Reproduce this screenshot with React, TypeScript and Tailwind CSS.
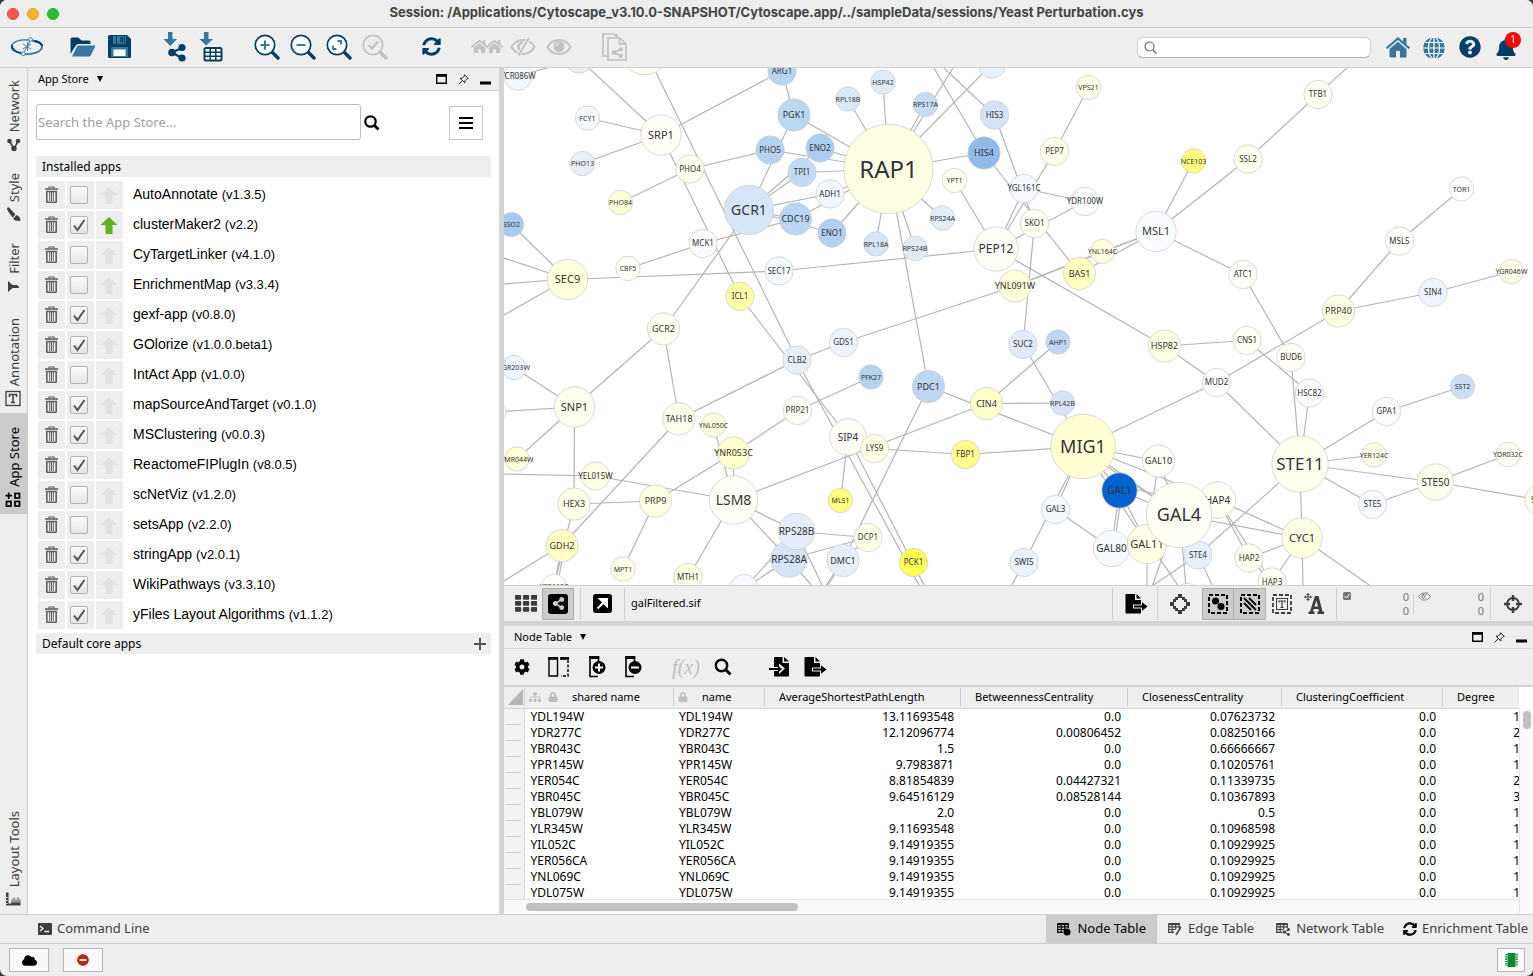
import { useState } from "react";
import type { ReactNode } from "react";
import {
  FaBell, FaCloud, FaCog, FaHome, FaLock, FaMinusCircle, FaQuestionCircle,
  FaShareAlt, FaSitemap, FaSyncAlt,
} from "react-icons/fa";

type GraphNode = [name: string, x: number, y: number, r: number, fill: string];

const nodes: GraphNode[] = [
  ["YCR086W", 518, 76, 14.5, "#f3f8fd"], ["@a", 579, 59, 14.5, "#e6effa"], ["@b", 645, 50, 25, "#fffff0"],
  ["ARG1", 782, 71, 14.5, "#b7d4f1"], ["RPL18B", 848, 99, 12.5, "#d9e8f8"], ["FCY1", 587.5, 118, 12.5, "#f4f9ff"],
  ["PGK1", 794, 115, 16.5, "#bcd7f2"], ["SRP1", 661, 135, 20.5, "#fffff7"], ["PHO5", 770, 150, 14.5, "#b5d1f0"],
  ["ENO2", 820, 148, 14.5, "#abcdf0"], ["PHO13", 582.5, 163.5, 12.5, "#e8effa"], ["PHO4", 690, 169, 14.5, "#fffff0"],
  ["TPI1", 802, 172.5, 14.5, "#c3daf4"], ["ADH1", 830, 194, 14.5, "#f1f7fc"], ["PHO84", 620.5, 202.5, 12.5, "#ffffd5"],
  ["GCR1", 749, 210, 25, "#d7e6f7"], ["CDC19", 795.5, 219, 16.5, "#b9d5f2"], ["ENO1", 832, 233, 14.5, "#b2d0f0"],
  ["SSO2", 511.5, 224.5, 12.5, "#a7cbef"], ["MCK1", 703, 243.5, 14.5, "#fafbff"], ["SEC17", 779, 271, 14.5, "#f6faff"],
  ["CBF5", 628, 268.5, 12.5, "#fffff7"], ["SEC9", 567.5, 279.5, 20.5, "#ffffdc"], ["ICL1", 740, 296.5, 14.5, "#ffffa8"],
  ["GCR2", 663.5, 329, 16.5, "#fffff0"], ["RAP1", 888.5, 169, 45, "#ffffe5"], ["HSP42", 883, 82, 12.5, "#dfebf9"],
  ["RPS17A", 925.5, 104.5, 12.5, "#c6dcf4"], ["@c", 992, 64, 14.5, "#e8f2fb"], ["HIS3", 994.5, 115, 14.5, "#d4e3f6"],
  ["HIS4", 984, 153, 16.5, "#91bae8"], ["VPS21", 1088.5, 87.5, 12.5, "#ffffe5"], ["PEP7", 1054.5, 151.5, 14.5, "#ffffec"],
  ["YPT1", 954.5, 180.5, 12.5, "#fffff2"], ["YGL161C", 1024, 188.5, 14.5, "#f6faff"], ["YDR100W", 1085, 201.5, 14.5, "#fbfdff"],
  ["RPS24A", 942.5, 218, 12.5, "#e3edfa"], ["SKO1", 1034.5, 223.5, 14.5, "#fffff2"], ["RPL18A", 876, 244, 12.5, "#d6e6f6"],
  ["RPS24B", 915, 248.5, 12.5, "#e0ecf9"], ["PEP12", 996, 249, 22.5, "#fffff7"], ["MSL1", 1156, 231.5, 20.5, "#f9fbff"],
  ["YNL164C", 1102.5, 251.5, 12.5, "#ffffdc"], ["BAS1", 1079.5, 273.5, 16.5, "#ffffc0"], ["YNL091W", 1015, 286, 16.5, "#ffffdc"],
  ["NCE103", 1193.5, 161, 12.5, "#ffff7d"], ["TFB1", 1318, 94.5, 14.5, "#fffff2"], ["SSL2", 1248, 159, 14.5, "#ffffee"],
  ["TOR1", 1461.5, 189, 12.5, "#fbfdff"], ["MSL5", 1399.5, 241, 14.5, "#fffffd"], ["ATC1", 1243, 274.5, 14.5, "#fffff9"],
  ["SIN4", 1433, 292.5, 14.5, "#eef4fd"], ["YGR046W", 1511.5, 271.5, 12.5, "#ffffe8"], ["PRP40", 1338.5, 311, 16.5, "#ffffe2"],
  ["YGR203W", 514, 367.5, 12.5, "#eef4fd"], ["SNP1", 574.5, 407, 20.5, "#ffffee"], ["@d", 494, 412, 12.5, "#fffff8"],
  ["YMR044W", 517, 459, 12.5, "#ffffd8"], ["TAH18", 679, 419, 16.5, "#fffff0"], ["YNL050C", 713.5, 425, 12.5, "#ffffdc"],
  ["YNR053C", 733.5, 453, 16.5, "#ffffcd"], ["CLB2", 797, 360, 14.5, "#e6effa"], ["GDS1", 843.5, 342.5, 14.5, "#eef4fd"],
  ["PRP21", 797.5, 410.5, 14.5, "#fffff5"], ["SIP4", 848, 437, 18.5, "#fffff7"], ["YEL015W", 595.5, 476, 14.5, "#ffffe5"],
  ["HEX3", 574, 504, 16.5, "#ffffe5"], ["PRP9", 655.5, 501, 16.5, "#ffffe2"], ["LSM8", 733.5, 500, 24.5, "#fffff5"],
  ["MLS1", 840.5, 500.5, 12.5, "#ffff80"], ["GDH2", 562, 545.5, 16.5, "#ffffc4"], ["RPS28A", 789, 559, 18.5, "#d5e5f6"],
  ["RPS28B", 796.5, 531.5, 18.5, "#e4eefa"], ["DMC1", 843, 560.5, 16.5, "#e6effa"], ["MPT1", 623, 569, 12.5, "#ffffe5"],
  ["MTH1", 688, 577.5, 14.5, "#ffffe0"], ["@e", 744, 588.5, 14.5, "#f8fbff"], ["YER110C", 554, 586.5, 12.5, "#fffffb"],
  ["SUC2", 1023, 344.5, 14.5, "#dfebf9"], ["AHP1", 1058, 342, 12.5, "#bed8f3"], ["HSP82", 1164.5, 346, 16.5, "#ffffe5"],
  ["PFK27", 871, 377, 12.5, "#b5d2f1"], ["PDC1", 928.5, 386.5, 16.5, "#bdd7f2"], ["CIN4", 986.5, 403.5, 16.5, "#ffffcb"],
  ["RPL42B", 1062.5, 403, 12.5, "#d6e5f6"], ["MIG1", 1083, 446.5, 32.5, "#ffffd2"], ["LYS9", 874.5, 448.5, 14.5, "#ffffe5"],
  ["FBP1", 965.5, 454.5, 14.5, "#ffff8c"], ["GAL10", 1158.5, 461, 16.5, "#fffff5"], ["GAL1", 1119.5, 490.5, 18, "#0063d1"],
  ["GAL3", 1055.5, 509.5, 14.5, "#f3f8fd"], ["GAL80", 1111.5, 548.5, 18.5, "#f6faff"], ["GAL11", 1147, 544, 20, "#ffffe5"],
  ["STE4", 1198, 555, 14.5, "#e6effa"], ["HAP4", 1217.5, 500, 18.5, "#fffff2"], ["GAL4", 1179, 515, 33, "#fffff5"],
  ["SWI5", 1024, 562.5, 14.5, "#e9f1fa"], ["DCP1", 868, 537.5, 14.5, "#ffffe8"], ["PCK1", 913.5, 562.5, 14.5, "#ffff55"],
  ["@f", 1187, 597.5, 14.5, "#ffffe5"], ["CNS1", 1247, 340.5, 14.5, "#fffff5"], ["BUD6", 1291, 357.5, 14.5, "#fffff7"],
  ["MUD2", 1216.5, 382.5, 14.5, "#fefeff"], ["HSC82", 1309.5, 393, 14.5, "#fafbff"], ["GPA1", 1386.5, 411.5, 14.5, "#fcfdff"],
  ["SST2", 1462.5, 386.5, 12.5, "#cbdef5"], ["STE11", 1300, 464, 28.5, "#fffff0"], ["YER124C", 1374, 455, 12.5, "#ffffe5"],
  ["STE50", 1435.5, 482, 18.5, "#ffffee"], ["YDR032C", 1508, 454.5, 12.5, "#fffff2"], ["STE5", 1372.5, 504.5, 14.5, "#f6faff"],
  ["STE7", 1540, 500, 15.5, "#ffffee"], ["CYC1", 1302, 538, 20.5, "#ffffe2"], ["HAP2", 1249, 558, 14.5, "#fffff2"],
  ["HAP3", 1272, 582, 14.5, "#fffff2"],
];

const links =
  "YCR086W-@a @a-SRP1 @b-CLB2 SRP1-ARG1 SRP1-FCY1 SRP1-PHO13 SRP1-ICL1 ICL1-SIP4 ARG1-PGK1 PGK1-GCR1 PGK1-RAP1 PHO4-PHO5 PHO4-PHO84 PHO5-RAP1 ENO2-RAP1 TPI1-RAP1 TPI1-GCR1 ENO2-GCR1 ADH1-GCR1 ADH1-RAP1 CDC19-GCR1 CDC19-RAP1 ENO1-RAP1 ENO1-GCR1 MCK1-CDC19 MCK1-CBF5 GCR1-GCR2 SEC9-SSO2 SEC9-SEC17 SEC17-PEP12 RAP1-RPL18B RAP1-HSP42 RAP1-RPS17A RAP1-@c RAP1-HIS4 HIS3-SKO1 HIS4-BAS1 YPT1-PEP12 RAP1-RPS24A RAP1-RPL18A RAP1-RPS24B RAP1-PDC1 PEP7-VPS21 PEP7-PEP12 YGL161C-PEP12 YGL161C-YDR100W YDR100W-PEP12 SKO1-SUC2 PEP12-HSP82 YNL091W-MSL1 BAS1-MSL1 YNL164C-MSL1 YNL091W-YNL164C YNL091W-GDS1 MSL1-NCE103 MSL1-SSL2 MSL1-ATC1 SSL2-TFB1 ATC1-BUD6 MSL5-TOR1 MSL5-PRP40 PRP40-SIN4 SIN4-YGR046W PRP40-MUD2 SNP1-GCR2 SNP1-YGR203W SNP1-@d SNP1-YMR044W SNP1-HEX3 TAH18-GCR2 TAH18-CLB2 TAH18-GDH2 CLB2-GDS1 PRP21-YNR053C PRP21-PFK27 YNR053C-PRP9 YNR053C-LSM8 YNL050C-LSM8 YEL015W-LSM8 LSM8-CIN4 LSM8-RPS28B LSM8-RPS28A LSM8-MTH1 HEX3-PRP9 HEX3-YER110C GDH2-YER110C PRP9-MPT1 SIP4-MLS1 SIP4-LYS9 RPS28B-DCP1 RPS28A-DCP1 RPS28A-@e RPS28B-@e DMC1-DCP1 PDC1-DMC1 PDC1-MIG1 CIN4-AHP1 CIN4-RPL42B SUC2-MIG1 LYS9-FBP1 FBP1-MIG1 MIG1-MUD2 MIG1-GAL10 MIG1-GAL4 MIG1-GAL1 MIG1-GAL11 MIG1-GAL3 MIG1-SWI5 MIG1-HAP4 GAL3-GAL80 GAL1-GAL80 GAL1-GAL11 GAL1-GAL4 GAL10-GAL4 GAL10-GAL11 STE11-MUD2 STE11-BUD6 STE11-HSC82 STE11-GPA1 STE11-YER124C STE11-STE50 STE11-STE5 STE11-CYC1 STE11-STE4 STE50-STE5 STE50-YDR032C STE50-STE7 GPA1-SST2 HSP82-CNS1 HSP82-MUD2 CNS1-HSC82 HAP4-CYC1 GAL4-CYC1 HAP4-HAP2 HAP4-HAP3 CYC1-HAP2 CYC1-HAP3 HAP2-HAP3";

const strayLines: [number, number, number, number][] = [
  [567, 279, 504, 258], [567, 279, 504, 284], [567, 279, 504, 315], [891, 168, 953, 68], [984, 153, 934, 68],
  [994, 115, 944, 68], [1318, 94, 1347, 68], [595, 476, 504, 474], [562, 545, 504, 581], [797, 361, 920, 587],
  [848, 437, 925, 587], [789, 559, 813, 587], [796, 531, 823, 587], [843, 560, 825, 587], [843, 560, 827, 587],
  [1024, 562, 1011, 587], [1122, 490, 1114, 548], [1122, 486, 1180, 500], [1085, 452, 1152, 496], [1302, 538, 1303, 587],
  [1302, 538, 1372, 587], [1198, 555, 1213, 587], [1147, 544, 1147, 587], [1150, 544, 1179, 587], [1170, 535, 1152, 587],
  [1198, 555, 1152, 586], [1181, 530, 1186, 587], [565, 545, 557, 587],
];

const byName = new Map(nodes.map((n) => [n[0], n]));

function labelSize(r: number) {
  if (r > 40) return 24;
  if (r > 30) return 18;
  if (r > 26) return 17;
  if (r > 23) return 14;
  if (r > 21) return 12;
  if (r > 19) return 11;
  if (r > 17) return 10;
  if (r > 16) return 9;
  if (r > 14) return 8;
  return 7;
}

function NetworkCanvas() {
  return (
    <svg className="block h-full w-full" viewBox="504 68 1029 517" preserveAspectRatio="xMinYMin slice" role="img" aria-label="galFiltered.sif network">
      <g stroke="#b4b4b4" strokeWidth="1.2">
        {links.split(" ").map((l) => {
          const [a, b] = l.split("-").map((k) => byName.get(k)!);
          return <line key={l} x1={a[1]} y1={a[2]} x2={b[1]} y2={b[2]} />;
        })}
        {strayLines.map(([x1, y1, x2, y2], i) => <line key={i} x1={x1} y1={y1} x2={x2} y2={y2} />)}
      </g>
      {nodes.map(([name, x, y, r, fill]) => (
        <g key={name}>
          <circle cx={x} cy={y} r={r - 0.3} fill={fill} stroke="#cfcfcf" strokeWidth="0.8" />
          {name[0] !== "@" && (
            <text x={x} y={y + labelSize(r) * 0.36} fontSize={labelSize(r)} textAnchor="middle" fill="#333333">{name}</text>
          )}
        </g>
      ))}
    </svg>
  );
}

function ToolButton({ label, children, className = "" }: { label: string; children: ReactNode; className?: string }) {
  return <button type="button" aria-label={label} className={`relative flex h-9 w-9 items-center justify-center ${className}`}>{children}</button>;
}

const NAVY = "#053e63";
const BLUE = "#36769f";

function Magnifier({ color, fill = "none", children }: { color: string; fill?: string; children: ReactNode }) {
  return (
    <svg width="26" height="26" viewBox="0 0 26 26" fill="none">
      <path d="M18 18l6 6" stroke={color} strokeWidth="3.4" strokeLinecap="round" />
      <circle cx="11" cy="11" r="9.7" stroke={color} strokeWidth="1.7" fill={fill} />
      {children}
    </svg>
  );
}

function EyeSlash({ size = 26 }: { size?: number }) {
  return (
    <svg width={size} height={size} viewBox="0 0 26 26" fill="none" stroke="currentColor" strokeWidth="1.8">
      <path d="M1.5 13C4 8.5 8 6 13 6s9 2.5 11.5 7C22 17.5 18 20 13 20s-9-2.5-11.5-7z" />
      <path d="M13 8.500a4.500 4.500 0 0 0-3.500 7.500" strokeWidth="2.600" />
      <path d="M19.500 3.500L8 22" stroke="#eee" strokeWidth="4" />
      <path d="M19 4L8.500 21.500" strokeWidth="1.800" />
    </svg>
  );
}

function MainToolbar() {
  return (
    <header className="flex h-10 shrink-0 items-center justify-between border-b border-[#d0d0d0] bg-[#eeeeee] px-[9px]">
      <div className="flex items-center gap-5 pb-0.5">
        <ToolButton label="Cytoscape">
          <svg width="34" height="22" viewBox="0 0 34 22" fill="none">
            <path d="M19 4C10 3 2 6 1.500 10.500C1 14 6 16.500 12 17.500" stroke={BLUE} strokeWidth="1.300" />
            <path d="M2 9c-1 4 4 7 9 8" stroke={NAVY} strokeWidth="1.800" />
            <path d="M22 4.500c6 .6 10 3 10 6c0 5-8 8-17 7.500" stroke={BLUE} strokeWidth="1.800" />
            <path d="M24 5c5 1 8 3 8 5" stroke={NAVY} strokeWidth="2" />
            <path d="M20 5l-2.500 5.500L14 16M13 8l8 5M21 8l-8 5M17.500 6v9" stroke={BLUE} strokeWidth="0.900" />
            <circle cx="20.500" cy="3.500" r="1.800" stroke={BLUE} fill="#fff" />
            <circle cx="13.500" cy="17.800" r="1.800" stroke={BLUE} fill="#fff" />
          </svg>
        </ToolButton>
        <div className="flex">
          <ToolButton label="Open session">
            <svg width="26" height="20" viewBox="0 0 26 20">
              <path d="M.5 17V2Q.5.5 2 .5h6.500l3 3h7.500q1.500 0 1.500 1.500v2H8.500Q6.500 7 5.500 9z" fill={NAVY} />
              <path d="M2 19.500L7 9.500Q7.500 8.500 9 8.500h16.500L21 18q-.7 1.500-2.500 1.500z" fill={BLUE} />
            </svg>
          </ToolButton>
          <ToolButton label="Save session">
            <svg width="23" height="23" viewBox="0 0 23 23">
              <path d="M0 1.500Q0 0 1.500 0H19l4 4v17.500q0 1.500-1.500 1.500h-20Q0 23 0 21.500z" fill={NAVY} />
              <path d="M5 1h13v8H5z" fill={BLUE} /><path d="M8.500 1v8M16.500 1v8" stroke={NAVY} /><path d="M12.500 2h2.500v5.500h-2.500z" fill={NAVY} />
              <path d="M3 12h17v10H3z" fill={BLUE} /><path d="M5.500 14.500h12v6.500h-12z" fill="#fff" />
            </svg>
          </ToolButton>
        </div>
        <div className="flex">
          <ToolButton label="Import network">
            <svg width="24" height="32" viewBox="0 0 24 32">
              <path d="M5 1h4.500v7h4.500L7.200 15L.5 8H5z" fill={BLUE} />
              <path d="M9 21.500L19 17M9 21.500l10 5.500" stroke={NAVY} strokeWidth="2.200" />
              <circle cx="9" cy="21.500" r="3.800" fill={NAVY} /><circle cx="19" cy="16.500" r="3.600" fill={NAVY} /><circle cx="19" cy="27" r="3.600" fill={NAVY} />
            </svg>
          </ToolButton>
          <ToolButton label="Import table">
            <svg width="24" height="32" viewBox="0 0 24 32">
              <path d="M5 1h4.500v7h4.500L7.200 14.500L.5 8H5z" fill={BLUE} />
              <rect x="5.500" y="17" width="17" height="12.500" rx="1.500" fill="#fff" stroke={NAVY} strokeWidth="2" />
              <path d="M5.500 21.300h17M5.500 25.300h17M11.200 16.500v13M16.800 16.500v13" stroke={NAVY} strokeWidth="1.500" />
            </svg>
          </ToolButton>
        </div>
        <div className="flex">
          <ToolButton label="Zoom in"><Magnifier color={NAVY} fill="#fff"><path d="M11 6.500v9M6.500 11h9" stroke={BLUE} strokeWidth="2" /></Magnifier></ToolButton>
          <ToolButton label="Zoom out"><Magnifier color={NAVY} fill="#fff"><path d="M6.500 11h9" stroke={BLUE} strokeWidth="2" /></Magnifier></ToolButton>
          <ToolButton label="Fit content"><Magnifier color={NAVY} fill="#fff"><path d="M11.500 7H15v3.500M7 11.500V15h3.500" stroke={BLUE} strokeWidth="1.900" /></Magnifier></ToolButton>
          <ToolButton label="Fit selected"><Magnifier color="#c2c2c2"><path d="M6.500 11l3.500 3.500l6-7" stroke="#c2c2c2" strokeWidth="2.400" /></Magnifier></ToolButton>
        </div>
        <ToolButton label="Apply layout"><FaSyncAlt size={19} color={NAVY} /></ToolButton>
        <div className="flex text-[#c2c2c2]">
          <ToolButton label="First neighbours">
            <FaHome size={17} className="shrink-0" /><FaHome size={17} className="-ml-0.5 shrink-0" />
          </ToolButton>
          <ToolButton label="Hide selected"><EyeSlash /></ToolButton>
          <ToolButton label="Show all">
            <svg width="26" height="26" viewBox="0 0 26 26" fill="none">
              <path d="M1.500 13C4 8.500 8 6 13 6s9 2.500 11.500 7C22 17.500 18 20 13 20s-9-2.500-11.500-7z" stroke="currentColor" strokeWidth="1.800" />
              <circle cx="13" cy="12.500" r="5.500" fill="currentColor" /><path d="M10 12a3 3 0 0 1 3-2.500" stroke="#eee" strokeWidth="1.200" />
            </svg>
          </ToolButton>
        </div>
        <ToolButton label="New network from selection">
          <svg width="26" height="28" viewBox="0 0 26 28" fill="none" stroke="#c2c2c2" strokeWidth="1.700">
            <path d="M5 23H1V1h11l3 3" /><path d="M6 5h12l6 6v16H6z" /><path d="M17.500 5v6H24M15 1v4" />
            <path d="M11.500 19.500l8-3.500M11.500 19.500l8 3.500" /><g fill="#c2c2c2" stroke="none"><circle cx="12" cy="19.500" r="2.300" /><circle cx="18.800" cy="16.300" r="2.100" /><circle cx="18.800" cy="22.800" r="2.100" /></g>
          </svg>
        </ToolButton>
      </div>
      <div className="flex items-center">
        <label className="mr-[9px] flex h-[21px] w-[234px] items-center rounded-[6px] border border-[#cfcfcf] border-b-[#b5b5b5] bg-white px-[6px]">
          <svg width="13" height="13" viewBox="0 0 13 13" fill="none" stroke="#6d6d6d" strokeWidth="1.200"><circle cx="5.500" cy="5.500" r="4.500" /><path d="M9 9l3.500 3.500" /></svg>
          <input aria-label="Search network" className="ml-1 min-w-0 flex-1 bg-transparent text-xs outline-none" />
        </label>
        <ToolButton label="Home">
          <svg width="24" height="21" viewBox="0 0 24 21" fill={BLUE}>
            <path d="M12 0L0 10.500l1.300 1.500L12 3l10.700 9l1.300-1.500L20.500 7.500V1H17v3.500z" />
            <path d="M12 4.800L3.500 12v7.500q0 1 1 1H10V14h4v6.500h5.500q1 0 1-1V12z" />
          </svg>
        </ToolButton>
        <ToolButton label="Web">
          <svg width="24" height="24" viewBox="0 0 24 24" fill="none">
            <circle cx="12" cy="12" r="11.500" fill="#fff" /><circle cx="12" cy="12" r="10.800" fill={BLUE} />
            <path d="M12 1v22M1 12h22M3 6.500h18M3 17.500h18" stroke="#fff" strokeWidth="1.200" /><ellipse cx="12" cy="12" rx="5.500" ry="11" stroke="#fff" strokeWidth="1.200" />
          </svg>
        </ToolButton>
        <ToolButton label="Help" className="pb-0.5"><FaQuestionCircle size={22} color={NAVY} /></ToolButton>
        <ToolButton label="Notifications">
          <FaBell size={22} color={NAVY} className="mt-0.5" />
          <span className="absolute right-[3px] top-[2px] flex h-4 w-4 items-center justify-center rounded-full bg-[#fb0007] text-[10px] text-white">1</span>
        </ToolButton>
      </div>
    </header>
  );
}

const sideTabs = [
  { name: "Network", box: "h-[91px]" }, { name: "Style", box: "h-[70px]" }, { name: "Filter", box: "h-[72px]" },
  { name: "Annotation", box: "h-[112px]" }, { name: "App Store", box: "h-[101px] bg-[#cbcbcb] text-black" },
];

function SideIcon({ name }: { name: string }) {
  return (
    <svg width="17" height="17" viewBox="0 0 17 17" fill="currentColor" className="shrink-0">
      {name === "Network" && <><path d="M4.500 5l4.500 8l4-8" fill="none" stroke="currentColor" strokeWidth="1.600" /><circle cx="4.500" cy="5" r="2.300" /><circle cx="13" cy="5" r="2.300" /><circle cx="9" cy="12.500" r="2.700" /></>}
      {name === "Style" && <><path d="M2.500 1.500Q3.500.8 4.500 2l6 6.500l-3 3Q2.500 5 2 3z" /><path d="M8.300 12.300l3-3q4 .7 4.200 5.200l-2 .5q-4.700 0-5.200-2.700z" /></>}
      {name === "Filter" && <path d="M3 3v11l4.500-4H14V9l-2-2H7.500z" />}
      {name === "Annotation" && <><rect x="1" y="1.500" width="14" height="14" fill="none" stroke="currentColor" strokeWidth="1.300" /><path d="M4.500 7V4.500h7V7M8 4.500v8M6 12.500h4" fill="none" stroke="currentColor" strokeWidth="1.500" /></>}
      {name === "App Store" && <g fill="none" stroke="currentColor" strokeWidth="1.700"><rect x="1.500" y="10.500" width="4.500" height="4.500" /><rect x="10" y="10.500" width="4.500" height="4.500" /><rect x="10" y="2.500" width="4.500" height="4.500" /><path d="M3.700 1.500v6.500M.5 4.700H7" /></g>}
      {name === "Layout Tools" && <path d="M1 1.500h2.500v11h3v-4h1v3h1v-5h1v5h1v-3h1v3h1v-5h1v5h1v-3h1v6H1v-1.500h1.500v-1H1v-2h1.500v-1H1v-2h1.500v-1H1z" />}
    </svg>
  );
}

function SideTab({ name, box }: { name: string; box: string }) {
  return (
    <button type="button" className={`flex w-full shrink-0 flex-col items-center justify-end gap-1 pb-1.5 text-[13px] leading-4 ${box}`}>
      <span className="rotate-180 [writing-mode:vertical-rl]">{name}</span>
      <SideIcon name={name} />
    </button>
  );
}

function PanelHeader({ title, inset }: { title: string; inset: string }) {
  return (
    <div className={`flex h-[23px] shrink-0 items-center justify-between border-b border-[#d4d4d4] bg-[#eeeeee] pl-2.5 ${inset}`}>
      <button type="button" className="flex items-center gap-2 text-[11px]">
        {title}
        <svg width="6" height="6" viewBox="0 0 6 6"><path d="M0 0h6L3 6z" /></svg>
      </button>
      <div className="flex items-center gap-[11px]">
        <button type="button" aria-label="Float"><svg className="block" width="11" height="10" viewBox="0 0 11 10"><path d="M.7 1h9.600v8.300H.7z" fill="none" stroke="#000" strokeWidth="1.400" /><path d="M0 0h11v2.800H0z" /></svg></button>
        <button type="button" aria-label="Undock"><svg className="block" width="11" height="11" viewBox="0 0 11 11" fill="none" stroke="#222"><path d="M6.500.700l3.800 3.800l-1.200.2l-2.300 2.300l.1 2L2 4.200l2 .1l2.300-2.300zM4.300 6.700L.7 10.300" /></svg></button>
        <button type="button" aria-label="Minimize"><svg className="block" width="11" height="11" viewBox="0 0 11 11"><path d="M0 7.500h11V10.500H0z" /></svg></button>
      </div>
    </div>
  );
}

const apps: [string, string, boolean][] = [
  ["AutoAnnotate", "v1.3.5", false], ["clusterMaker2", "v2.2", true], ["CyTargetLinker", "v4.1.0", false], ["EnrichmentMap", "v3.3.4", false],
  ["gexf-app", "v0.8.0", true], ["GOlorize", "v1.0.0.beta1", true], ["IntAct App", "v1.0.0", false], ["mapSourceAndTarget", "v0.1.0", true],
  ["MSClustering", "v0.0.3", true], ["ReactomeFIPlugIn", "v8.0.5", true], ["scNetViz", "v1.2.0", false], ["setsApp", "v2.2.0", false],
  ["stringApp", "v2.0.1", true], ["WikiPathways", "v3.3.10", true], ["yFiles Layout Algorithms", "v1.1.2", true],
];

function AppRow({ name, version, initial }: { name: string; version: string; initial: boolean }) {
  const [on, setOn] = useState(initial);
  const id = "app-" + name.replace(/ /g, "-");
  return (
    <li className="flex h-7 items-center gap-0.5 pl-0.5">
      <button type="button" aria-label={`Uninstall ${name}`} className="flex h-7 w-[27px] items-center justify-center bg-[#eeeeee] pb-0.5">
        <svg width="13" height="17" viewBox="0 0 13 17" fill="none" stroke="#606060">
          <path d="M0 3h13" strokeWidth="1.600" /><path d="M4 2.500V1h5v1.500" strokeWidth="1.200" />
          <path d="M1.800 5.500h9.400v10q0 .8-.8.800H2.600q-.8 0-.8-.800z" strokeWidth="1.600" /><path d="M4.700 6v9M6.500 6v9M8.300 6v9" strokeWidth="1" />
        </svg>
      </button>
      <span className="relative flex h-7 w-[27px] items-center justify-center bg-[#eeeeee] pr-[3px]">
        <input id={id} type="checkbox" checked={on} onChange={() => setOn(!on)} className="h-[18px] w-[18px] appearance-none rounded-[2px] border border-[#b3b3b3] bg-gradient-to-b from-[#fbfbfb] to-[#e6e6e6]" />
        {on && <svg className="pointer-events-none absolute" width="13" height="13" viewBox="0 0 13 13"><path d="M1 6.500L4.500 11L11.500 1" fill="none" stroke="#555" strokeWidth="2" /></svg>}
      </span>
      <button type="button" aria-label={`Update ${name}`} disabled={name !== "clusterMaker2"} className="flex h-7 w-[27px] items-center justify-center bg-[#eeeeee] pr-px">
        <svg width="18" height="17" viewBox="0 0 18 17"><path d="M9 0l8.500 8H12.500v9h-7V8H.5z" fill={name === "clusterMaker2" ? "#62b31b" : "#e1e1e1"} /></svg>
      </button>
      <label htmlFor={id} className="ml-2 pb-0.5 font-['Liberation_Sans',sans-serif] text-[14px] leading-5">
        {name} <span className="text-[13px]">({version})</span>
      </label>
    </li>
  );
}

function AppStorePanel() {
  return (
    <section className="flex w-[471px] shrink-0 flex-col overflow-hidden bg-white">
      <PanelHeader title="App Store" inset="pr-2" />
      <div className="flex flex-col px-2 pt-[13px]">
        <div className="flex items-center pr-2">
          <input aria-label="Search the App Store" placeholder="Search the App Store..." className="h-9 w-[325px] rounded-[3px] border border-[#bdbdbd] px-px text-[13px] placeholder:text-[#a0a0a0]" />
          <button type="button" aria-label="Search" className="ml-[3px] mt-0.5"><svg className="block" width="16" height="16" viewBox="0 0 16 16" fill="none" stroke="#000"><circle cx="6.500" cy="6.500" r="5.200" strokeWidth="2.200" /><path d="M10.500 10.500l4 4" strokeWidth="2.800" /></svg></button>
          <button type="button" aria-label="Menu" className="ml-auto mt-0.5 flex h-[34px] w-[34px] items-center justify-center border border-[#c6c6c6]">
            <svg width="14" height="12" viewBox="0 0 14 12"><path d="M0 1h14M0 6h14M0 11h14" stroke="#000" strokeWidth="2" /></svg>
          </button>
        </div>
        <h2 className="mt-4 flex h-[21px] items-center bg-[#eeeeee] px-1.5 text-xs">Installed apps</h2>
        <ul className="mb-1 mt-1 flex flex-col gap-0.5">
          {apps.map(([name, version, initial]) => <AppRow key={name} name={name} version={version} initial={initial} />)}
        </ul>
        <h2 className="flex h-[21px] items-center justify-between bg-[#eeeeee] pl-1.5 pr-[5px] text-xs">
          Default core apps
          <svg width="12" height="12" viewBox="0 0 12 12"><path d="M6 0v12M0 6h12" stroke="#5a5a5a" strokeWidth="2" /></svg>
        </h2>
      </div>
    </section>
  );
}

function ExportIcon() {
  return (
    <svg width="23" height="20" viewBox="0 0 23 20">
      <path d="M1.500 0H10v6h6v4.500H8v4h8V18.500q0 1-1 1H1.500q-1 0-1-1V1q0-1 1-1zM11.500 0L16 4.500h-4.500z" />
      <path d="M9 11.500h8V8.300l5.500 4.200L17 16.700V13.500H9z" />
    </svg>
  );
}

const Divider = () => <span className="h-8 w-px bg-[#cfcfcf]" />;

function NetworkBar() {
  return (
    <div className="flex h-9 shrink-0 items-center justify-between border-t border-[#d0d0d0] bg-[#eeeeee]">
      <div className="flex items-center">
        <button type="button" aria-label="Grid view" className="flex w-[38px] justify-center pl-1.5">
          <svg width="22" height="17" viewBox="0 0 22 17" fill="#3c3c3c">
            {[0, 8, 16].map((x) => [0, 6, 12].map((y) => <rect key={x + "-" + y} x={x} y={y} width="6.200" height="4.800" rx="1" />))}
          </svg>
        </button>
        <button type="button" aria-label="Network view" className="mr-1.5 flex h-8 w-8 items-center justify-center border border-[#adadad] bg-[#cbcbcb]">
          <span className="flex h-5 w-5 items-center justify-center rounded-[3px] bg-black"><FaShareAlt size={13} color="#cbcbcb" /></span>
        </button>
        <Divider />
        <button type="button" aria-label="Detach view" className="mx-3">
          <svg className="block" width="19" height="19" viewBox="0 0 19 19"><rect width="19" height="19" rx="3" /><path d="M4.500 14.500l7-7M7 5h7v7z" fill="#fff" stroke="#fff" strokeWidth="2" /></svg>
        </button>
        <Divider />
        <span className="ml-1.5 text-[11px]">galFiltered.sif</span>
      </div>
      <div className="flex items-center">
        <Divider />
        <button type="button" aria-label="Export" className="flex w-11 justify-center pl-0.5"><ExportIcon /></button>
        <Divider />
        <button type="button" aria-label="Always show graphics details" className="flex w-11 justify-center">
          <svg width="20" height="20" viewBox="0 0 20 20" fill="#3c3c3c"><path d="M8 0h4v4H8zM5 3h3v3H5zM12 3h3v3h-3zM3 5h3v3H3zM14 5h3v3h-3zM0 8h4v4H0zM16 8h4v4h-4zM3 12h3v3H3zM14 12h3v3h-3zM5 14h3v3H5zM12 14h3v3h-3zM8 16h4v4H8z" /></svg>
        </button>
        <button type="button" aria-label="Select nodes" className="flex h-8 w-8 items-center justify-center border border-[#adadad] bg-[#cbcbcb]">
          <svg width="20" height="20" viewBox="0 0 20 20"><rect x="1" y="1" width="18" height="18" fill="none" stroke="#000" strokeWidth="2" strokeDasharray="4 2" /><circle cx="7.500" cy="7" r="3.500" /><circle cx="13" cy="12.500" r="3.500" /></svg>
        </button>
        <button type="button" aria-label="Select edges" className="flex h-8 w-8 items-center justify-center border border-l-0 border-[#adadad] bg-[#cbcbcb]">
          <svg width="20" height="20" viewBox="0 0 20 20" fill="none" stroke="#000"><rect x="1" y="1" width="18" height="18" strokeWidth="2" strokeDasharray="4 2" /><path d="M4 4l12 12M9 4l7 7M4 9l7 7" strokeWidth="1.800" /></svg>
        </button>
        <button type="button" aria-label="Select annotations" className="flex w-8 justify-center">
          <svg width="20" height="20" viewBox="0 0 20 20" fill="none" stroke="#3c3c3c"><rect x="1" y="1" width="18" height="18" strokeWidth="1.800" strokeDasharray="4 2" /><rect x="4.500" y="4.500" width="11" height="11" /><path d="M7 8.500V7h6v1.500M10 7v6.500M8.500 13.500h3" strokeWidth="1.200" /></svg>
        </button>
        <button type="button" aria-label="Select labels" className="mr-1.5 flex w-8 items-start justify-center text-[#3c3c3c]">
          <svg width="20" height="22" viewBox="0 0 20 22" fill="currentColor">
            <path d="M4 0l2 2H4.500v1.500H6V2.500l2 1.500l-2 1.500V4.500H4.500V6H6L4 8L2 6h1.500V4.500H2v1L0 4l2-1.500v1h1.500V2H2z" />
            <path d="M11 3h3.500L18.500 18.500H20V21h-6.500v-2.500H15l-.6-2.500H9.800L9 18.500h1.500V21H4.500v-2.500H6zM12.300 7.500L10.500 13.500h3.500z" fillRule="evenodd" />
          </svg>
        </button>
        <Divider />
        <div className="flex w-[76px] items-start justify-between pl-1.5 pr-1 text-[11px] leading-[14px] text-[#777]">
          <svg width="8" height="8" viewBox="0 0 8 8" className="mt-0.5"><rect width="8" height="8" rx="1.500" fill="#777" /><path d="M1.500 4l2 2l3-4" stroke="#fff" fill="none" /></svg>
          <span className="text-right">0<br />0</span>
        </div>
        <span className="h-5 w-px bg-[#cfcfcf]" />
        <div className="flex w-[76px] items-start justify-between pl-1 pr-1.5 text-[11px] leading-[14px] text-[#777]">
          <EyeSlash size={13} />
          <span className="text-right">0<br />0</span>
        </div>
        <Divider />
        <button type="button" aria-label="Centre view" className="flex w-[42px] justify-center pl-0.5">
          <svg width="18" height="18" viewBox="0 0 18 18" fill="none" stroke="#3c3c3c" strokeWidth="1.800"><circle cx="9" cy="9" r="6" /><path d="M9 0v6M9 12v6M0 9h6M12 9h6" strokeWidth="2.400" /></svg>
        </button>
      </div>
    </div>
  );
}

const columns = ["shared name", "name", "AverageShortestPathLength", "BetweennessCentrality", "ClosenessCentrality", "ClusteringCoefficient", "Degree"];
const rows = [
  ["YDL194W", "13.11693548", "0.0", "0.07623732", "1"], ["YDR277C", "12.12096774", "0.00806452", "0.08250166", "2"],
  ["YBR043C", "1.5", "0.0", "0.66666667", "1"], ["YPR145W", "9.7983871", "0.0", "0.10205761", "1"],
  ["YER054C", "8.81854839", "0.04427321", "0.11339735", "2"], ["YBR045C", "9.64516129", "0.08528144", "0.10367893", "3"],
  ["YBL079W", "2.0", "0.0", "0.5", "1"], ["YLR345W", "9.11693548", "0.0", "0.10968598", "1"],
  ["YIL052C", "9.14919355", "0.0", "0.10929925", "1"], ["YER056CA", "9.14919355", "0.0", "0.10929925", "1"],
  ["YNL069C", "9.14919355", "0.0", "0.10929925", "1"], ["YDL075W", "9.14919355", "0.0", "0.10929925", "1"],
];

function ColumnDoc({ minus = false }: { minus?: boolean }) {
  return (
    <svg width="18" height="22" viewBox="0 0 18 22" fill="none">
      <path d="M10 20.500H2V1.200h8.500V6" stroke="#000" strokeWidth="1.600" /><path d="M1.200 0h10v3h-10z" fill="#000" />
      <circle cx="11" cy="11.500" r="6.500" fill="#000" /><path d={minus ? "M7 11.500h8" : "M11 7.500v8M7 11.500h8"} stroke="#fff" strokeWidth="2" />
    </svg>
  );
}

function NodeTablePanel() {
  return (
    <section className="flex shrink-0 flex-col">
      <PanelHeader title="Node Table" inset="pr-1.5" />
      <div className="flex h-9 items-center bg-[#eeeeee] pl-1.5">
        <button type="button" aria-label="Settings" className="flex w-6 justify-center"><FaCog size={16} /></button>
        <button type="button" aria-label="Columns" className="ml-3 flex w-6 justify-center">
          <svg width="21" height="20" viewBox="0 0 21 20" fill="none" stroke="#000"><path d="M1 1h8.500v18H1z" strokeWidth="1.400" /><path d="M13 1h7v18h-7" strokeWidth="1.400" strokeDasharray="3 1.500" /><path d="M0 1.500h10M12 1.500h9" strokeWidth="2.500" /></svg>
        </button>
        <button type="button" aria-label="Add column" className="ml-[15px] flex w-6 justify-center"><ColumnDoc /></button>
        <button type="button" aria-label="Delete column" className="ml-3 flex w-6 justify-center"><ColumnDoc minus /></button>
        <button type="button" disabled className="ml-6 w-[34px] text-center font-['Liberation_Serif',serif] text-[20px] italic leading-6 text-[#c0c0c0]">f(x)</button>
        <button type="button" aria-label="Search" className="ml-2 flex w-6 justify-center"><svg width="18" height="18" viewBox="0 0 18 18" fill="none" stroke="#000"><circle cx="7.500" cy="7.500" r="5.700" strokeWidth="2.400" /><path d="M12 12l4.500 4.500" strokeWidth="3" /></svg></button>
        <button type="button" aria-label="Import table" className="ml-8 flex w-6 justify-center">
          <svg width="21" height="20" viewBox="0 0 21 20"><path d="M6 0h7.500v6H20v12.500q0 1-1 1H6q-1 0-1-1V14h5v3l6-5.500L10 6.500V10H5V1q0-1 1-1zM15 0l5 4.500h-5z" /><path d="M0 11h9V8.800L13 12l-4 3.200V13H0z" /></svg>
        </button>
        <button type="button" aria-label="Export table" className="ml-3 flex w-6 justify-center"><ExportIcon /></button>
      </div>
      <div className="flex h-[229px] border-t-2 border-[#d4d4d4] bg-white">
        <div className="flex min-w-0 flex-1 flex-col">
          <div className="min-h-0 flex-1 overflow-hidden">
            <table className="w-[1022px] table-fixed border-collapse">
              <colgroup>
                <col className="w-[20px]" /><col className="w-[149px]" /><col className="w-[91px]" /><col className="w-[196px]" />
                <col className="w-[167px]" /><col className="w-[154px]" /><col className="w-[161px]" /><col className="w-[84px]" />
              </colgroup>
              <thead>
                <tr className="h-[21px] border-b border-[#d4d4d4] bg-[#eeeeee]">
                  <th className="p-0" aria-label="Row"><svg className="ml-1 block" width="15" height="16" viewBox="0 0 15 16"><path d="M15 0v16H0z" fill="#b5b5b5" /></svg></th>
                  {columns.map((c, i) => (
                    <th key={c} className="p-0 text-left text-[11px] font-normal">
                      <div className="flex h-[18px] items-center gap-[7px] border-l border-[#cfcfcf] text-black">
                        {i === 0 && <FaSitemap size={12} color="#bdbdbd" className="ml-1" />}
                        {i < 2 && <FaLock size={10} color="#bdbdbd" className={i ? "ml-1" : ""} />}
                        <span className={i < 2 ? "ml-[7px]" : "ml-[14px]"}>{c}</span>
                      </div>
                    </th>
                  ))}
                </tr>
              </thead>
              <tbody>
                {rows.map(([name, avg, betw, clos, deg]) => (
                  <tr key={name} className="h-4 text-xs leading-4">
                    <td className="border-r border-[#d8d8d8] bg-[#f2f2f2] p-0"><div className="ml-0.5 h-4 w-[15px] border-b border-[#cfcfcf]" /></td>
                    <td className="px-1.5 py-0">{name}</td>
                    <td className="px-1.5 py-0">{name}</td>
                    {[avg, betw, clos, "0.0", deg].map((v, i) => <td key={i} className="px-1.5 py-0 text-right">{v}</td>)}
                  </tr>
                ))}
              </tbody>
            </table>
          </div>
          <div className="flex h-[15px] shrink-0 items-center border-t border-[#e4e4e4] bg-[#fafafa] pl-[22px]">
            <div className="h-2 w-[272px] rounded-full bg-[#c1c1c1]" />
          </div>
        </div>
        <div className="mt-[22px] flex w-[14px] justify-center border-l border-[#e4e4e4] bg-[#fafafa] pt-0.5">
          <div className="h-[18px] w-2 rounded-full bg-[#c1c1c1]" />
        </div>
      </div>
    </section>
  );
}

function TabGlyph({ kind }: { kind: string }) {
  return (
    <svg width="14" height="13" viewBox="0 0 14 13" fill="none" stroke="currentColor">
      <path d="M.700 1h10.600v4M.700 1v8.300H6M4.200 1v8.300M7.700 1v5M.700 3.800h10.600M.700 6.500h7" strokeWidth="1.200" /><path d="M.5 1h11" strokeWidth="2" />
      {kind === "Node" && <circle cx="10" cy="9" r="3.500" fill="currentColor" stroke="none" />}
      {kind === "Edge" && <path d="M13 4L8 12" strokeWidth="1.500" />}
      {kind === "Network" && <><path d="M8 9l5-2.500M8 9l5 2.500" /><g fill="currentColor" stroke="none"><circle cx="8" cy="9" r="1.500" /><circle cx="12.500" cy="6.500" r="1.400" /><circle cx="12.500" cy="11.500" r="1.400" /></g></>}
    </svg>
  );
}

export default function App() {
  return (
    <div className="h-screen bg-[#3a3a3a] font-['Noto_Sans',sans-serif] text-black">
      <div className="flex h-full flex-col overflow-hidden rounded-[7px] bg-[#eeeeee]">
        <div className="relative flex h-7 shrink-0 items-center justify-center border-b border-[#c6c6c6] bg-[#ecedec]">
          <div className="absolute left-[7px] flex gap-2">
            <span className="h-3 w-3 rounded-full border border-[#e24640] bg-[#fe5551]" />
            <span className="h-3 w-3 rounded-full border border-[#dfa023] bg-[#feb429]" />
            <span className="h-3 w-3 rounded-full border border-[#1dad2b] bg-[#27c136]" />
          </div>
          <h1 className="pb-px font-['Inter',sans-serif] text-[13px] font-bold text-[#434544]">Session: /Applications/Cytoscape_v3.10.0-SNAPSHOT/Cytoscape.app/../sampleData/sessions/Yeast Perturbation.cys</h1>
        </div>
        <MainToolbar />
        <main className="flex min-h-0 flex-1">
          <nav aria-label="Panels" className="flex w-7 shrink-0 flex-col border-r border-[#cfcfcf] text-[#404040]">
            {sideTabs.map((t) => <SideTab key={t.name} {...t} />)}
            <div className="mt-auto"><SideTab name="Layout Tools" box="h-[118px]" /></div>
          </nav>
          <AppStorePanel />
          <div className="w-[5px] shrink-0 bg-[#d4d4d4]" />
          <div className="flex min-w-0 flex-1 flex-col">
            <div className="min-h-0 flex-1 overflow-hidden bg-white"><NetworkCanvas /></div>
            <NetworkBar />
            <div className="h-[5px] shrink-0 bg-[#d4d4d4]" />
            <NodeTablePanel />
          </div>
        </main>
        <div className="flex h-[30px] shrink-0 items-stretch justify-between border-y border-[#cfcfcf] text-[13px] text-[#404040]">
          <button type="button" className="ml-[38px] flex items-center gap-[5px]">
            <svg width="14" height="12" viewBox="0 0 14 12"><rect width="14" height="12" rx="1" fill="#3c3c3c" /><path d="M2 3l3 2.500L2 8M6.500 8.500H11" fill="none" stroke="#fff" strokeWidth="1.300" /></svg>
            Command Line
          </button>
          <div className="flex pr-[5px]">
            {["Node", "Edge", "Network"].map((k) => (
              <button key={k} type="button" className={`flex items-center gap-1.5 px-[11px] ${k === "Node" ? "bg-[#cbcbcb] text-black" : ""}`}><TabGlyph kind={k} />{k} Table</button>
            ))}
            <button type="button" className="flex items-center gap-[5px] pl-2"><FaSyncAlt size={14} color="#000" />Enrichment Table</button>
          </div>
        </div>
        <footer className="flex h-8 shrink-0 items-center justify-between pl-[9px] pr-2">
          <div className="flex gap-[14px]">
            <button type="button" aria-label="Cloud status" className="flex h-6 w-10 items-center justify-center border border-[#b5b5b5] bg-[#f8f8f8]"><FaCloud size={15} /></button>
            <button type="button" aria-label="Job status" className="flex h-6 w-10 items-center justify-center border border-[#b5b5b5] bg-[#f8f8f8]"><FaMinusCircle size={12} color="#bf2410" /></button>
          </div>
          <button type="button" aria-label="Memory status" className="flex h-6 w-7 items-center justify-center border border-[#b5b5b5] bg-[#f8f8f8]">
            <svg width="13" height="14" viewBox="0 0 13 14"><rect x="2.500" y="0" width="8" height="14" fill="#078a34" /><path d="M1.200 1v12M11.800 1v12" stroke="#078a34" strokeWidth="2" strokeDasharray="1.300 1" /></svg>
          </button>
        </footer>
      </div>
    </div>
  );
}
